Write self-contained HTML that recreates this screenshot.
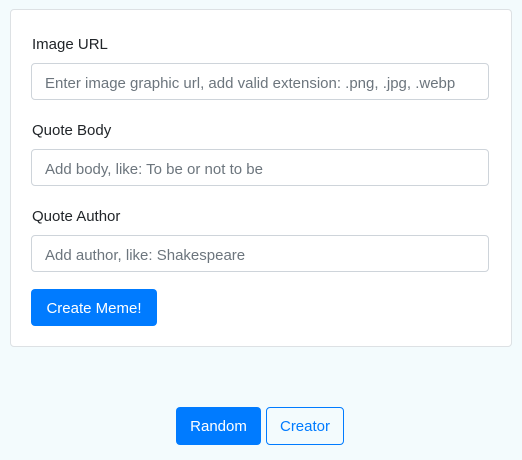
<!DOCTYPE html>
<html><head><style>
body{margin:0;width:522px;height:460px;background:#f3fbfd;font-family:"Liberation Sans",sans-serif;font-size:15px;color:#212529;position:relative;overflow:hidden}
.card{position:absolute;left:10px;top:9px;width:500px;height:336px;background:#fff;border:1px solid #dde1e4;border-radius:4px}
.l{position:absolute;left:21px;font-size:15px;top:0}
.i{position:absolute;left:20px;height:37px;border:1px solid #ced4da;border-radius:4px;box-sizing:border-box;width:458px;padding-left:13px;padding-top:3px;line-height:34px;color:#6c757d;font-size:15px;white-space:nowrap;overflow:hidden}
.b{position:absolute;border-radius:4px;box-sizing:border-box;text-align:center;font-size:15px;padding-top:2px}
</style></head><body>
<div class="card">
<div class="l" style="top:26px">Image URL</div>
<div class="i" style="top:53px">Enter image graphic url, add valid extension: .png, .jpg, .webp</div>
<div class="l" style="top:112px">Quote Body</div>
<div class="i" style="top:139px">Add body, like: To be or not to be</div>
<div class="l" style="top:198px">Quote Author</div>
<div class="i" style="top:225px">Add author, like: Shakespeare</div>
<div class="b" style="left:20px;top:279px;width:126px;height:37px;line-height:35px;background:#007bff;color:#fff">Create Meme!</div>
</div>
<div class="b" style="left:176px;top:407px;width:85px;height:38px;line-height:36px;background:#007bff;color:#fff">Random</div>
<div class="b" style="left:266px;top:407px;width:78px;height:38px;line-height:34px;border:1px solid #007bff;color:#007bff">Creator</div>
</body></html>
